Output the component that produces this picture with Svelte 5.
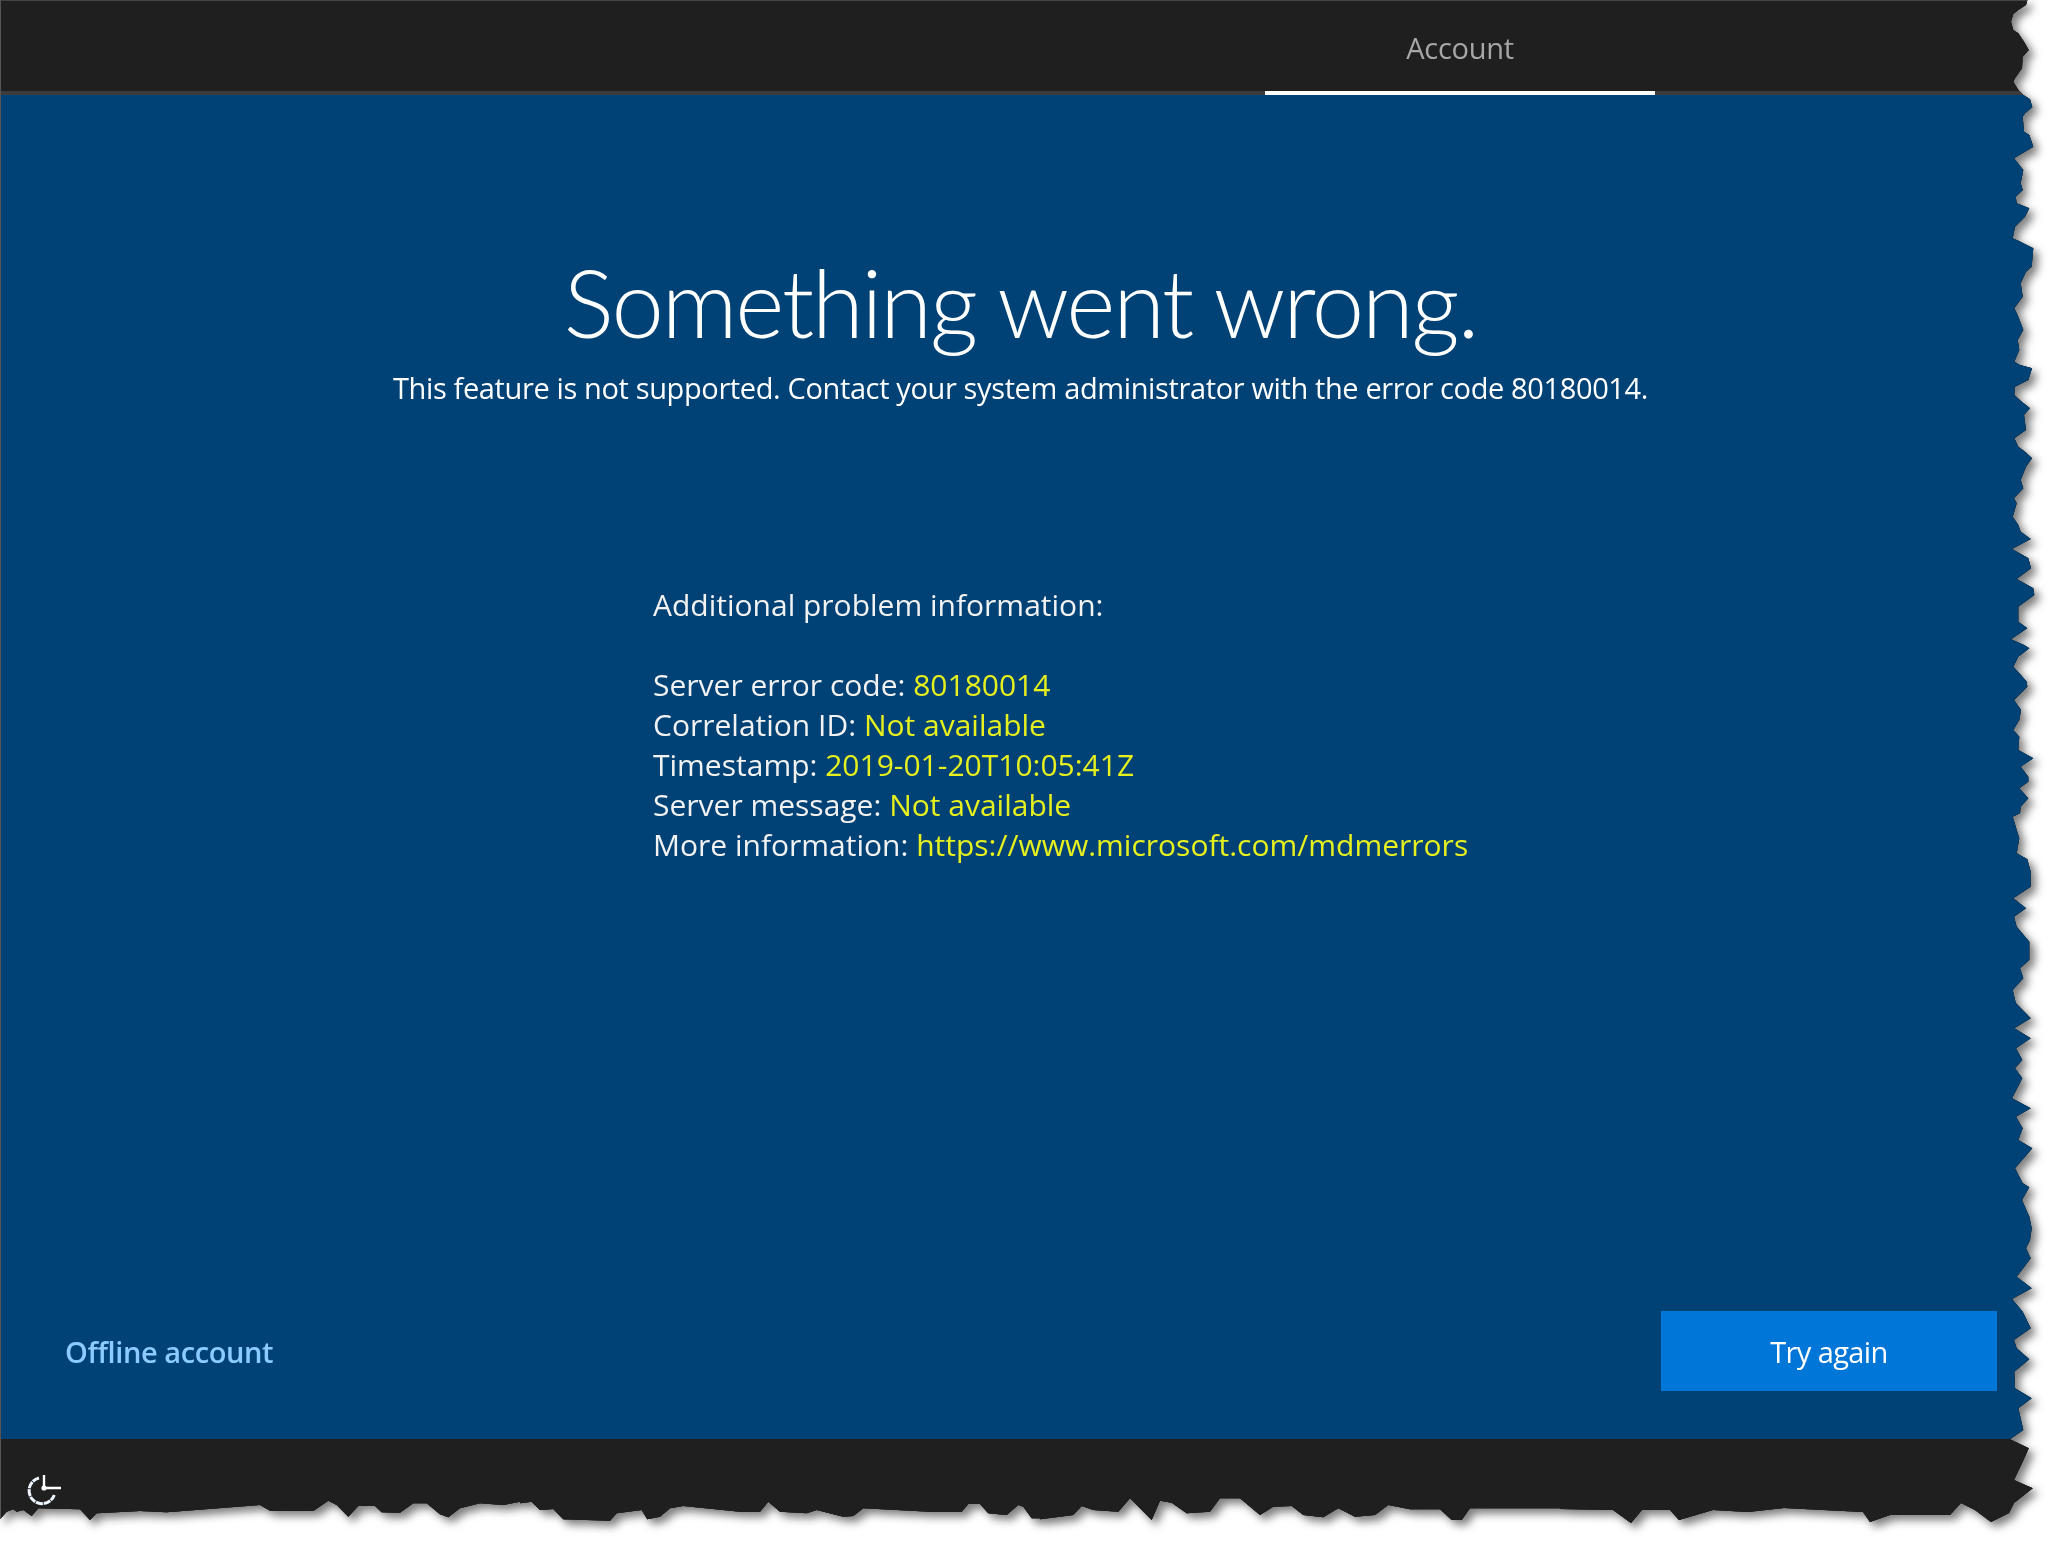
<script>
  // torn edge, traced off the reference: [x, y] in 3x zoom units of each crop
  const right = [
    [0, [232,0,228,15,205,30,190,42,183,65,190,90,205,100,222,125,236,150,218,170,216,205,195,235,190,245,205,270,220,285,240,298,247,322,225,340,218,350,222,395,238,405,250,440,225,455,192,475,208,495,220,510,212,550,218,570,197,590,200,610,238,625,225,650,195,680,188,715,205,722,250,745,245,800,228,815,212,850,218,890,193,925,205,950,220,990,203,1020,208,1050,193,1085,210,1095,246,1105,235,1140,195,1160,193,1185,215,1205,240,1225,222,1245,228,1290,193,1315,205,1340,225,1355,246,1375,228,1400,212,1440,220,1465,192,1495]],
    [500, [200,10,188,50,205,75,212,95,242,117,186,147,235,175,243,205,200,237,250,265,253,285,205,320,205,365,232,385,183,418,222,435,238,445,205,470,190,500,208,520,230,545,232,560,192,600,213,630,208,660,190,690,208,710,205,750,250,775,212,800,235,830,235,845,208,865,235,895,212,920,210,940,188,950,200,990,208,1015,200,1060,232,1078,242,1115,242,1160,190,1195,228,1225,192,1250,200,1280,238,1325,238,1380,210,1405,220,1435,188,1470,195,1500]],
    [1000, [198,10,242,55,193,85,242,115,198,145,217,180,195,205,217,235,186,295,242,325,198,350,218,385,205,420,247,445,195,505,218,550,238,562,216,600,238,650,245,685,240,720,228,745,242,775,200,830,245,865,186,897,218,935,242,985,192,1020,200,1045,238,1078,193,1115,195,1165,245,1195,205,1225,220,1290,180,1318,236,1345,218,1385,192,1440,248,1465]],
  ];
  const corner = [[2014,1503],[2009,1513],[1991,1522],[1975,1510],[1961,1503],[1950,1515],[1890,1515],[1870,1522],[1863,1512],[1784,1508],[1748,1512],[1713,1510],[1679,1520],[1670,1510],[1642,1510],[1631,1523],[1613,1510],[1560,1509]];
  const bottom = [
    [0, [0,118,20,95,40,88,50,95,70,90,95,108,115,85,240,88,270,120,290,100,420,93,500,97,780,75,810,92,940,93,985,62,1010,75,1045,110,1075,78,1125,78,1145,97,1200,98,1240,70,1280,70,1320,103,1345,112,1380,85,1440,70,1510,75,1560,65]],
    [520, [0,70,35,65,60,90,100,87,130,118,270,122,290,100,365,90,382,118,420,110,450,85,490,78,660,95,720,95,745,65,780,95,860,100,890,90,970,110,1000,108,1030,85,1230,95,1325,95,1345,72,1380,72,1405,100,1460,105,1495,75,1510,80,1535,115,1560,115]],
    [1040, [0,118,60,110,100,105,125,78,160,90,235,95,270,55,335,120,360,62,395,68,440,100,510,95,540,55,600,55,660,105,700,80,755,78,790,105,850,112,895,85,945,110,1005,105,1045,75,1110,88,1200,88,1235,120,1265,120,1290,85,1560,85]],
  ];

  const pts = [[0, 0]];
  for (const [off, list] of right) {
    for (let i = 0; i < list.length; i += 2) pts.push([1950 + list[i] / 3, off + list[i + 1] / 3]);
  }
  pts.push(...corner);
  const under = [];
  for (const [off, list] of bottom) {
    for (let i = 0; i < list.length; i += 2) under.push([off + list[i] / 3, 1480 + list[i + 1] / 3]);
  }
  pts.push(...under.reverse());
  const torn = `polygon(${pts.map(([x, y]) => `${x.toFixed(1)}px ${y.toFixed(1)}px`).join(',')})`;

  const details = [
    ['Server error code:', '80180014'],
    ['Correlation ID:', 'Not available'],
    ['Timestamp:', '2019-01-20T10:05:41Z'],
    ['Server message:', 'Not available'],
    ['More information:', 'https://www.microsoft.com/mdmerrors'],
  ];
</script>

<div class="page">
  <div class="shadow">
    <div class="frame" style="clip-path: {torn}">
      <header class="topbar">
        <div class="tab">Account</div>
      </header>

      <main class="content">
        <h1>Something went wrong.</h1>
        <p class="lead">This feature is not supported. Contact your system administrator with the error code 80180014.</p>

        <div class="info">
          <div class="info-title">Additional problem information:</div>
          {#each details as [label, value]}
            <div>{label} <span class="val">{value}</span></div>
          {/each}
        </div>

        <div class="actions">
          <span class="link">Offline account</span>
          <button class="btn">Try again</button>
        </div>
      </main>

      <footer class="bottombar">
        <svg class="ease" width="40" height="40" viewBox="0 0 40 40" fill="none" stroke="#eef6ff" stroke-width="3">
          <path d="M15 7 A13 13 0 1 0 30.3 24" stroke-dasharray="7 0.8" />
          <path d="M20 4 V17 H37" stroke="#fff" stroke-width="2.4" />
          <circle cx="20" cy="17" r="2.6" fill="#fff" stroke="none" />
        </svg>
      </footer>
    </div>
  </div>
</div>

<style>
  :global(body) {
    margin: 0;
    background: #fff;
  }

  .page {
    width: 2056px;
    height: 1544px;
    overflow: hidden;
    background: #fff;
    font-family: "Open Sans", "Noto Sans", sans-serif;
  }

  .shadow {
    width: 2040px;
    height: 1530px;
    filter: drop-shadow(0 0 0.4px #444) drop-shadow(5px 5px 4px rgba(0, 0, 0, 0.5));
  }

  .frame {
    display: flex;
    flex-direction: column;
    box-sizing: border-box;
    width: 2040px;
    height: 1530px;
    border-left: 1px solid #555;
    background: #1f1f1f;
  }

  .topbar {
    box-sizing: border-box;
    height: 95px;
    padding-left: 1264px;
    background: #1f1f1f;
    border-top: 1px solid #444;
    border-bottom: 4px solid #3c3c3c;
  }

  .tab {
    box-sizing: border-box;
    width: 390px;
    height: 94px;
    padding-top: 27px;
    border-bottom: 4px solid #fff;
    color: #a6a6a6;
    font-size: 29px;
    line-height: 40px;
    letter-spacing: -0.3px;
    text-align: center;
  }

  .content {
    display: flex;
    flex-direction: column;
    height: 1344px;
    background: #004275;
    color: #fff;
  }

  h1 {
    margin: 142px 0 0;
    font-family: Lato, "Open Sans", sans-serif;
    font-size: 94px;
    font-weight: 300;
    line-height: 130px;
    letter-spacing: -2.15px;
    text-align: center;
  }

  .lead {
    margin: 1px 0 0;
    font-size: 29px;
    line-height: 40px;
    letter-spacing: -0.37px;
    text-align: center;
  }

  .info {
    margin-top: 177px;
    padding-left: 652px;
    font-size: 30px;
    line-height: 40px;
    color: #f2f2f2;
  }

  .info-title {
    margin-bottom: 40px;
  }

  .val {
    color: #e6f01e;
  }

  .actions {
    display: flex;
    align-items: center;
    justify-content: space-between;
    margin-top: auto;
    padding: 0 43px 48px 64px;
  }

  .link {
    color: #8ccbff;
    font-size: 29px;
    font-weight: 600;
    letter-spacing: -0.42px;
  }

  .btn {
    width: 336px;
    height: 80px;
    border: none;
    background: #0076d9;
    color: #fff;
    font-family: inherit;
    font-size: 29px;
    letter-spacing: -0.6px;
  }

  .bottombar {
    flex: 1;
    padding: 32px 0 0 23px;
    background: #1f1f1f;
  }

  .ease {
    display: block;
  }
</style>
